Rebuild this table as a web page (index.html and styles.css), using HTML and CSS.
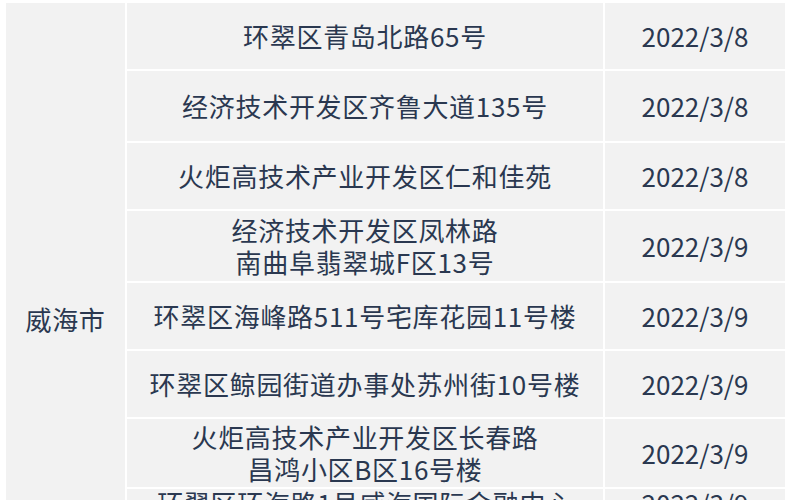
FILE: index.html
```html
<!DOCTYPE html>
<html lang="zh-CN">
<head>
<meta charset="utf-8">
<title>威海市</title>
<link rel="stylesheet" href="styles.css">
</head>
<body>
<table class="grid">
  <tbody>
    <tr class="row">
      <td class="city" rowspan="8">威海市</td>
      <td class="addr">环翠区青岛北路65号</td>
      <td class="date">2022/3/8</td>
    </tr>
    <tr class="row tall">
      <td class="addr">经济技术开发区齐鲁大道135号</td>
      <td class="date">2022/3/8</td>
    </tr>
    <tr class="row">
      <td class="addr">火炬高技术产业开发区仁和佳苑</td>
      <td class="date">2022/3/8</td>
    </tr>
    <tr class="row tall">
      <td class="addr">经济技术开发区凤林路<br>南曲阜翡翠城F区13号</td>
      <td class="date">2022/3/9</td>
    </tr>
    <tr class="row">
      <td class="addr">环翠区海峰路511号宅库花园11号楼</td>
      <td class="date">2022/3/9</td>
    </tr>
    <tr class="row">
      <td class="addr">环翠区鲸园街道办事处苏州街10号楼</td>
      <td class="date">2022/3/9</td>
    </tr>
    <tr class="row mid">
      <td class="addr">火炬高技术产业开发区长春路<br>昌鸿小区B区16号楼</td>
      <td class="date">2022/3/9</td>
    </tr>
    <tr class="row last">
      <td class="addr top">环翠区环海路1号威海国际金融中心</td>
      <td class="date top">2022/3/9</td>
    </tr>
  </tbody>
</table>
</body>
</html>
```
FILE: styles.css
```css
html, body {
  margin: 0;
  padding: 0;
  background: #ffffff;
  overflow: hidden;
}

body {
  font-family: "Noto Sans CJK SC", "Noto Sans", sans-serif;
  color: #2a3850;
}

.grid {
  margin: 1px 0 0 4px;
  border-collapse: separate;
  border-spacing: 2px;
  background: #ffffff;
  table-layout: fixed;
  width: 783px;
}

.grid td {
  background: #f2f2f2;
  text-align: center;
  vertical-align: middle;
  padding: 0;
  font-size: 26px;
  line-height: 32px;
}

.grid td.addr,
.grid td.city {
  letter-spacing: 0.7px;
}

.city {
  width: 119px;
}

.addr {
  width: 476px;
}

.date {
  width: 180px;
}

.row {
  height: 66px;
}

.row.tall {
  height: 70px;
}

.row.mid {
  height: 68px;
}

.row.last {
  height: 146px;
}

.grid td.top {
  vertical-align: top;
  line-height: 28px;
}
```
